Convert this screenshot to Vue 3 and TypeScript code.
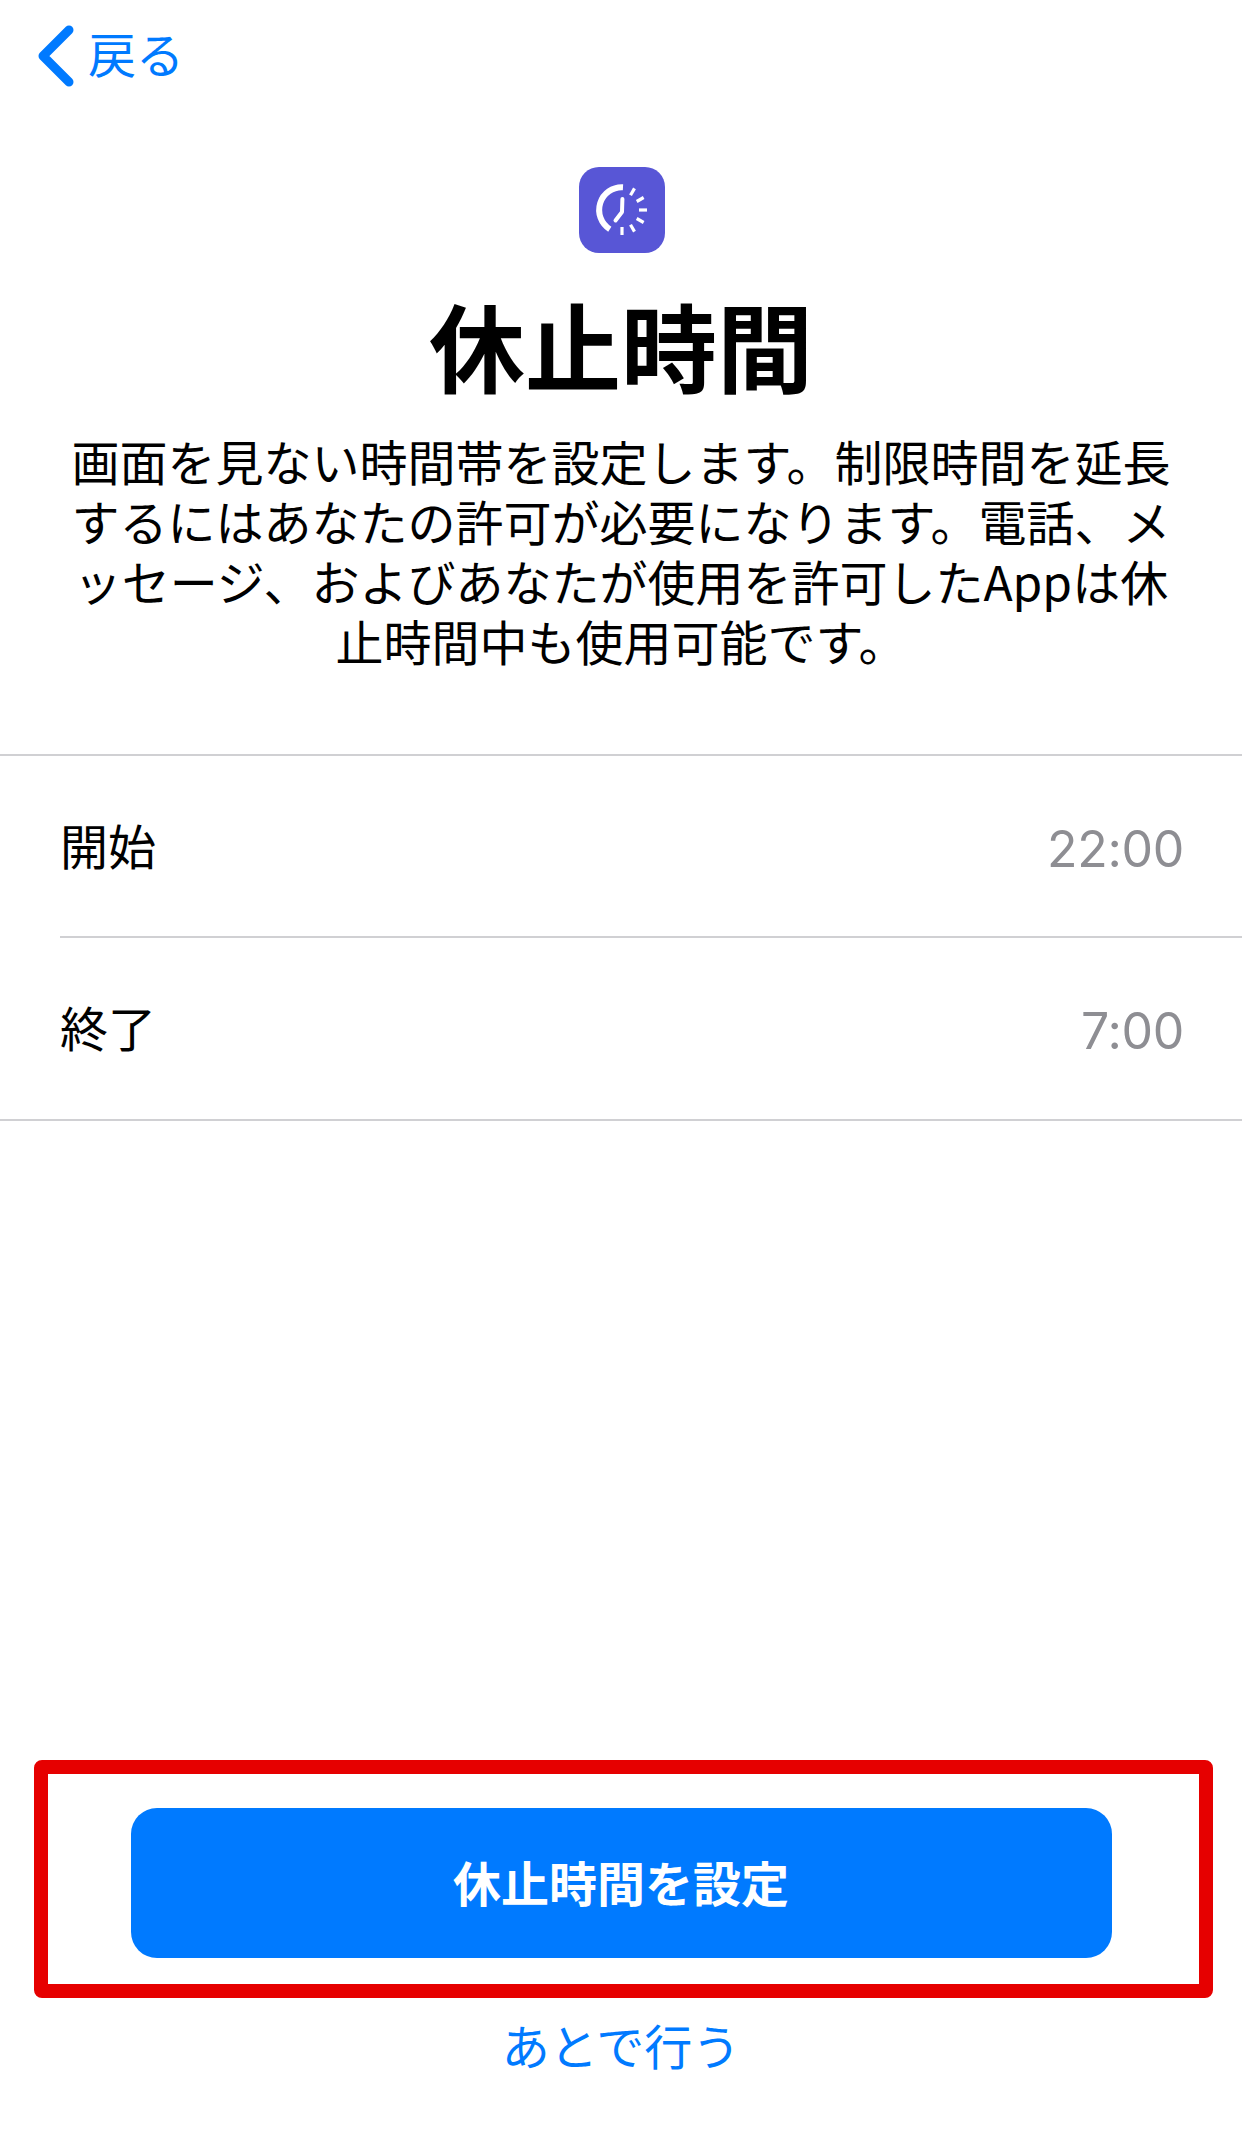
<template>
    <div class="page">
        <div class="nav">
            <svg class="back-icon" viewBox="0 0 38 64" width="38" height="64">
                <path d="M32 6 L6 32 L32 58" fill="none" stroke="#007aff" stroke-width="9" stroke-linecap="round" stroke-linejoin="round" />
            </svg>
            <span class="back-label">戻る</span>
        </div>

        <div class="app-icon">
            <svg viewBox="0 0 86 86" width="86" height="86">
                <path d="M44 20.3 A22.7 22.7 0 0 0 30.8 62.2" fill="none" stroke="#fff" stroke-width="6" />
                <path d="M43.4 32 L43 45 L36.5 53.5" fill="none" stroke="#fff" stroke-width="4" stroke-linecap="round" stroke-linejoin="round" />
                <line v-for="angle in tickAngles" :key="angle" x1="43" y1="26" x2="43" y2="18" stroke="#fff" stroke-width="3.2" :transform="`rotate(${angle} 43 43)`" />
            </svg>
        </div>

        <h1 class="title">休止時間</h1>
        <p class="description">
            画面を見ない時間帯を設定します。制限時間を延長<br />
            するにはあなたの許可が必要になります。電話、メ<br />
            ッセージ、およびあなたが使用を許可したAppは休<br />
            止時間中も使用可能です。
        </p>

        <div class="rows">
            <div v-for="row in rows" :key="row.label" class="row">
                <div class="row-inner">
                    <span class="row-label">{{ row.label }}</span>
                    <span class="row-value">{{ row.value }}</span>
                </div>
            </div>
        </div>

        <div class="highlight">
            <button class="primary">休止時間を設定</button>
        </div>
        <div class="later">あとで行う</div>
    </div>
</template>

<script setup lang="ts">
interface Row {
    label: string,
    value: string
}

const rows: Row[] = [
    { label: '開始', value: '22:00' },
    { label: '終了', value: '7:00' }
]

const tickAngles: number[] = [30, 60, 90, 120, 150, 180]
</script>

<style>
html, body {
    background: #fff;
}
</style>

<style scoped>
.page {
    width: 1242px;
    height: 2138px;
    background: #fff;
    display: flex;
    flex-direction: column;
    align-items: center;
    font-family: "Noto Sans CJK JP", "Liberation Sans", sans-serif;
    overflow: hidden;
}

.nav {
    width: 100%;
    height: 167px;
    box-sizing: border-box;
    padding: 24px 0 0 37px;
    display: flex;
    align-items: flex-start;
    gap: 13px;
    flex-shrink: 0;
}

.back-label {
    color: #007aff;
    font-size: 48px;
    line-height: 56px;
}

.app-icon {
    width: 86px;
    height: 86px;
    margin-left: 2px;
    border-radius: 20px;
    background: #5856d6;
    flex-shrink: 0;
}

.app-icon svg {
    display: block;
}

.title {
    margin: 26px 0 0;
    font-size: 96px;
    line-height: 130px;
    font-weight: 700;
    color: #000;
}

.description {
    margin: 21px 0 0;
    font-size: 48px;
    line-height: 60px;
    text-align: center;
    color: #000;
    white-space: nowrap;
}

.rows {
    width: 100%;
    margin-top: 84px;
    border-top: 2px solid #d0d0d3;
    border-bottom: 2px solid #d0d0d3;
    box-sizing: border-box;
}

.row {
    padding-left: 60px;
}

.row + .row .row-inner {
    height: 183px;
    border-top: 2px solid #d0d0d3;
}

.row-inner {
    height: 180px;
    box-sizing: border-box;
    display: flex;
    align-items: center;
    justify-content: space-between;
    padding-right: 58px;
}

.row-label {
    font-size: 48px;
    color: #000;
    padding-bottom: 5px;
}

.row-value {
    font-family: Inter, "Liberation Sans", sans-serif;
    font-size: 50px;
    letter-spacing: -0.3px;
    color: #8e8e93;
    padding-top: 5px;
}

.highlight {
    margin-top: auto;
    margin-left: 4px;
    width: 1179px;
    height: 238px;
    box-sizing: border-box;
    border: 14px solid #e60000;
    border-radius: 8px;
    padding: 8px 4px 0 0;
    display: flex;
    align-items: center;
    justify-content: center;
}

.primary {
    width: 981px;
    height: 150px;
    border: none;
    border-radius: 26px;
    background: #007aff;
    color: #fff;
    font-family: inherit;
    font-size: 48px;
    font-weight: 700;
    padding: 0 0 5px;
}

.later {
    height: 140px;
    padding-top: 14px;
    box-sizing: border-box;
    color: #007aff;
    font-size: 48px;
    line-height: 64px;
    flex-shrink: 0;
}
</style>
